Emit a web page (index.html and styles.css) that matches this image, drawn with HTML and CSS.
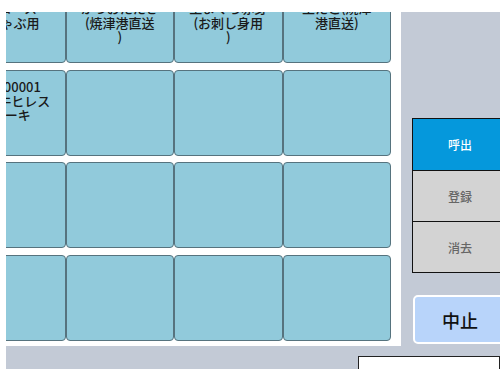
FILE: index.html
```html
<!DOCTYPE html>
<html lang="ja">
<head>
    <meta charset="UTF-8">
    <meta name="viewport" content="width=device-width, initial-scale=1.0">
    <title>メニュー呼出</title>
    <link rel="stylesheet" href="styles.css">
</head>
<body>

<div class="app">
    <div class="menu">
        <div class="menu-grid">
            <div class="cell"><span>000023</span><br>豚ロース<br>(しゃぶ用</div>
            <div class="cell"><span>000024</span><br>かつおたたき<br>(焼津港直送<br>)</div>
            <div class="cell"><span>000025</span><br>生まぐろ赤身<br>(お刺し身用<br>)</div>
            <div class="cell"><span>000026</span><br>生たこ(焼津<br>港直送)</div>

            <div class="cell">00000001<br>国産牛ヒレス<br>テーキ</div>
            <div class="cell"></div>
            <div class="cell"></div>
            <div class="cell"></div>

            <div class="cell"></div>
            <div class="cell"></div>
            <div class="cell"></div>
            <div class="cell"></div>

            <div class="cell"></div>
            <div class="cell"></div>
            <div class="cell"></div>
            <div class="cell"></div>
        </div>
    </div>

    <div class="side">
        <div class="mode-list">
            <button class="mode-button active">呼出</button>
            <button class="mode-button">登録</button>
            <button class="mode-button">消去</button>
        </div>
        <button class="cancel-button">中止</button>
    </div>

    <div class="footer">
        <div class="input-box"></div>
    </div>
</div>

</body>
</html>
```

FILE: styles.css
```css
html, body {
    height: 369px;
    overflow: hidden;
}

body {
    margin: 0;
    padding: 12px 0 0 6px;
    box-sizing: border-box;
    background-color: #ffffff;
    font-family: "Noto Sans CJK JP", "Noto Sans", sans-serif;
}

.app {
    display: grid;
    grid-template-columns: 395px 99px;
    grid-template-rows: 334px 23px;
    overflow: hidden;
}

/* メニューボタン一覧 (スクロール途中) */
.menu {
    background-color: #ffffff;
    overflow: hidden;
}

.menu-grid {
    display: grid;
    grid-template-columns: repeat(4, 108.5px);
    grid-auto-rows: 86px;
    row-gap: 6.5px;
    margin-left: -49px;
    margin-top: -35px;
}

.cell {
    background-color: #91cadb;
    border: 1px solid #56737e;
    border-radius: 4px;
    box-sizing: border-box;
    padding-top: 9px;
    color: #1a1a1a;
    font-size: 13px;
    font-weight: 500;
    line-height: 14.3px;
    text-align: center;
    white-space: nowrap;
    overflow: hidden;
}

.side {
    background-color: #c3cad6;
    padding: 106px 0 0 11px;
    overflow: hidden;
}

.mode-list {
    width: 94px;
    border: 1px solid #111111;
    display: flex;
    flex-direction: column;
}

.mode-button {
    height: 51px;
    border: none;
    border-top: 1px solid #111111;
    background-color: #d3d3d3;
    color: #666666;
    font-family: inherit;
    font-size: 12px;
    font-weight: 500;
    padding: 0;
}

.mode-button:first-child {
    border-top: none;
}

.mode-button.active {
    background-color: #0598dc;
    color: #ffffff;
}

.cancel-button {
    display: block;
    margin-top: 22px;
    margin-left: 1px;
    width: 94px;
    height: 49px;
    background-color: #b8d4fa;
    border: 2px solid #ffffff;
    border-radius: 5px;
    color: #111111;
    font-family: inherit;
    font-size: 18px;
    font-weight: 500;
}

.footer {
    grid-column: span 2;
    background-color: #c3cad6;
    padding: 10px 0 0 352px;
    overflow: hidden;
}

.input-box {
    height: 30px;
    background-color: #ffffff;
    border: 1px solid #222222;
}
```
